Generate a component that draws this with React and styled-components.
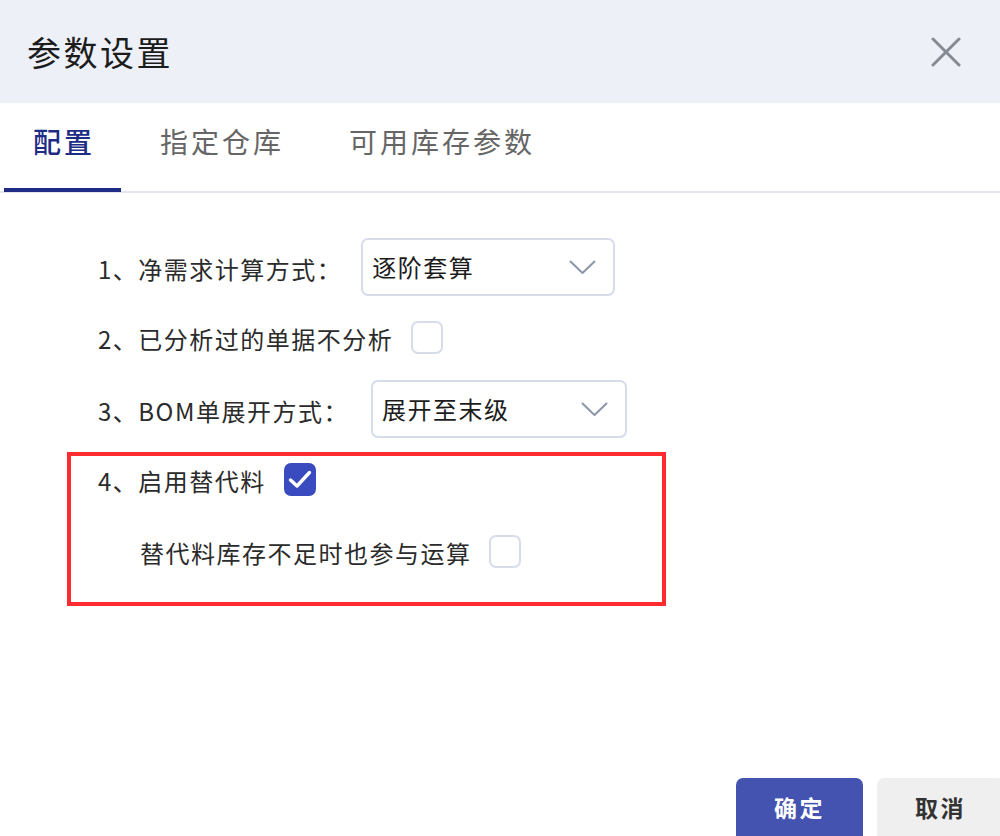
import React, { useState } from "react";
import styled, { createGlobalStyle } from "styled-components";

const Global = createGlobalStyle`
  html, body { margin: 0; padding: 0; background: #fff; }
  body { font-family: "Noto Sans CJK SC", "Noto Sans", sans-serif; overflow: hidden; }
  * { box-sizing: border-box; }
`;

const Dialog = styled.div`
  width: 1000px;
  height: 836px;
  display: flex;
  flex-direction: column;
  background: #fff;
  overflow: hidden;
`;

const Header = styled.div`
  height: 103px;
  flex: none;
  background: #edf0f7;
  display: flex;
  align-items: center;
  justify-content: space-between;
  padding: 0 38px 0 27px;
`;

const Title = styled.div`
  font-size: 34px;
  letter-spacing: 2.5px;
  color: #1c1c1c;
  line-height: 1;
`;

const CloseBtn = styled.button`
  border: 0;
  background: transparent;
  padding: 0;
  width: 32px;
  height: 32px;
  display: flex;
  align-items: center;
  justify-content: center;
  cursor: pointer;
`;

const Tabs = styled.div`
  height: 90px;
  flex: none;
  display: flex;
  gap: 10px;
  padding-left: 4px;
  border-bottom: 2px solid #e4e7ef;
`;

const Tab = styled.div`
  position: relative;
  height: 100%;
  display: flex;
  align-items: center;
  padding: 0 26px 12px 29px;
  font-size: 28px;
  letter-spacing: 3px;
  color: ${(p) => (p.$active ? "#1f2c86" : "#666")};
  font-weight: ${(p) => (p.$active ? 500 : 400)};
  &::after {
    content: "";
    display: ${(p) => (p.$active ? "block" : "none")};
    position: absolute;
    left: 0;
    right: 0;
    bottom: -1px;
    height: 4px;
    background: #1f2c86;
  }
`;

const Body = styled.div`
  flex: 1;
  padding: 45px 0 0 67px;
  display: flex;
  flex-direction: column;
`;

const Row = styled.div`
  display: flex;
  align-items: center;
  height: ${(p) => p.$h || 58}px;
  margin-left: ${(p) => p.$indent || 0}px;
  margin-bottom: ${(p) => p.$mb || 0}px;
`;

const Label = styled.span`
  font-size: 24px;
  letter-spacing: 1.5px;
  color: #2b2b2b;
  white-space: nowrap;
  line-height: 1;
  padding-top: 3px;
`;

const SelectBox = styled.div`
  width: ${(p) => p.$w}px;
  height: 58px;
  margin-left: ${(p) => p.$ml}px;
  border: 2px solid #d6dcea;
  border-radius: 7px;
  display: flex;
  align-items: center;
  justify-content: space-between;
  padding: 0 17px 0 9px;
  background: #fff;
`;

const SelectText = styled.span`
  font-size: 24px;
  letter-spacing: 1.5px;
  color: #1c1c1c;
  line-height: 1;
`;

const Check = styled.div`
  width: 32px;
  height: 33px;
  margin-left: ${(p) => p.$ml || 16}px;
  border-radius: 7px;
  border: 2px solid ${(p) => (p.$checked ? "#3a4bbf" : "#d6dcea")};
  background: ${(p) => (p.$checked ? "#3a4bbf" : "#fff")};
  display: flex;
  align-items: center;
  justify-content: center;
  cursor: pointer;
`;

const Highlight = styled.div`
  width: 599px;
  margin-top: 14px;
  border: 4px solid #ff2b2f;
  padding: 7px 0 34px 27px;
  display: flex;
  flex-direction: column;
`;

const Footer = styled.div`
  height: 58px;
  flex: none;
  display: flex;
  gap: 14px;
  padding-left: 736px;
  overflow: hidden;
`;

const Button = styled.button`
  flex: none;
  width: 127px;
  height: 68px;
  border: 0;
  border-radius: 7px;
  font-family: "Noto Sans CJK SC", sans-serif;
  font-size: 23px;
  letter-spacing: 2.5px;
  font-weight: 700;
  padding: 0 0 10px;
  background: ${(p) => (p.$primary ? "#4553b0" : "#efefef")};
  color: ${(p) => (p.$primary ? "#fff" : "#333")};
  cursor: pointer;
`;

const Chevron = () => (
  <svg width="27" height="15" viewBox="0 0 27 15" fill="none">
    <path d="M1.5 1.5 L13.5 13 L25.5 1.5" stroke="#8c95aa" strokeWidth="2" strokeLinecap="round" strokeLinejoin="round" />
  </svg>
);

const CheckMark = () => (
  <svg width="24" height="19" viewBox="0 0 24 19" fill="none">
    <path d="M2.5 10 L9 16 L21.5 2.5" stroke="#fff" strokeWidth="3.4" strokeLinecap="round" strokeLinejoin="round" />
  </svg>
);

const CloseIcon = () => (
  <svg width="30" height="30" viewBox="0 0 30 30" fill="none">
    <path d="M2 2 L28 28 M28 2 L2 28" stroke="#858a94" strokeWidth="3" strokeLinecap="round" />
  </svg>
);

export default function App() {
  const [tab, setTab] = useState(0);
  const [c2, setC2] = useState(false);
  const [c4, setC4] = useState(true);
  const [c5, setC5] = useState(false);
  const tabs = ["配置", "指定仓库", "可用库存参数"];
  return (
    <Dialog>
      <Global />
      <Header>
        <Title>参数设置</Title>
        <CloseBtn aria-label="close">
          <CloseIcon />
        </CloseBtn>
      </Header>
      <Tabs>
        {tabs.map((t, i) => (
          <Tab key={t} $active={tab === i} onClick={() => setTab(i)}>
            {t}
          </Tab>
        ))}
      </Tabs>
      <Body>
        <Row $indent={31} $mb={12}>
          <Label>1、净需求计算方式：</Label>
          <SelectBox $w={254} $ml={19}>
            <SelectText>逐阶套算</SelectText>
            <Chevron />
          </SelectBox>
        </Row>
        <Row $indent={31} $mb={14}>
          <Label>2、已分析过的单据不分析</Label>
          <Check $checked={c2} $ml={18} onClick={() => setC2(!c2)}>
            {c2 && <CheckMark />}
          </Check>
        </Row>
        <Row $indent={31}>
          <Label>3、BOM单展开方式：</Label>
          <SelectBox $w={256} $ml={22}>
            <SelectText>展开至末级</SelectText>
            <Chevron />
          </SelectBox>
        </Row>
        <Highlight>
          <Row $h={32} $mb={40}>
            <Label>4、启用替代料</Label>
            <Check $checked={c4} $ml={18} onClick={() => setC4(!c4)}>
              {c4 && <CheckMark />}
            </Check>
          </Row>
          <Row $h={33} $indent={42}>
            <Label>替代料库存不足时也参与运算</Label>
            <Check $checked={c5} $ml={17} onClick={() => setC5(!c5)}>
              {c5 && <CheckMark />}
            </Check>
          </Row>
        </Highlight>
      </Body>
      <Footer>
        <Button $primary>确定</Button>
        <Button>取消</Button>
      </Footer>
    </Dialog>
  );
}
